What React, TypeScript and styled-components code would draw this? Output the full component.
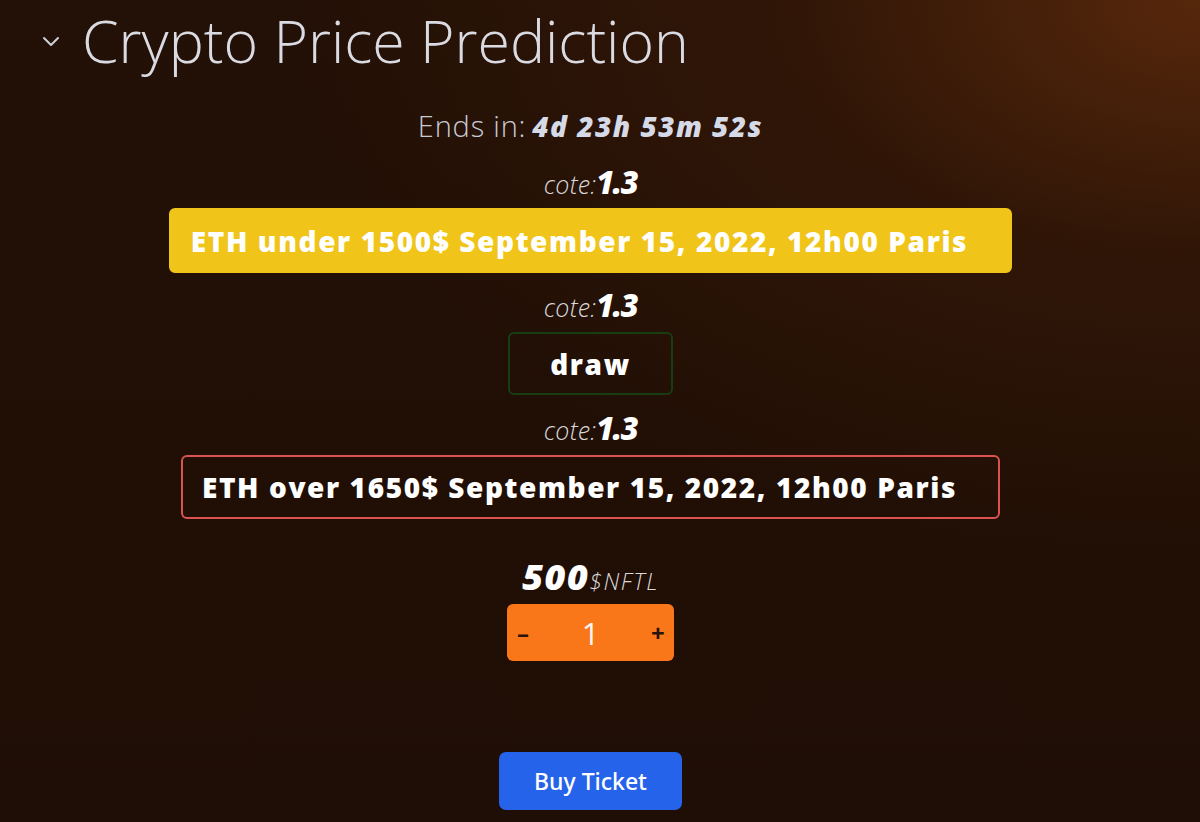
import React from 'react';
import styled, { createGlobalStyle } from 'styled-components';

const GlobalStyle = createGlobalStyle`
  html, body {
    margin: 0;
    padding: 0;
    height: 100%;
  }
  body {
    background: #1f0f05;
    font-family: 'Open Sans', 'Noto Sans', sans-serif;
  }
`;

type ChoiceProps = {
  $variant: 'yellow' | 'green' | 'red';
};

const Page = styled.div`
  width: 1200px;
  height: 822px;
  overflow: hidden;
  background:
    radial-gradient(ellipse 900px 560px at 1200px 0px, rgba(92, 42, 12, 0.9) 0%, rgba(62, 28, 8, 0.5) 45%, rgba(31, 15, 5, 0) 100%),
    linear-gradient(180deg, #231006 0%, #1f0e05 100%);
  display: flex;
  flex-direction: column;
`;

const Header = styled.div`
  display: flex;
  align-items: center;
  gap: 20px;
  padding-left: 40px;
  height: 84px;
`;

const Title = styled.h1`
  margin: 0 0 4px;
  font-family: 'Open Sans', sans-serif;
  font-weight: 300;
  font-size: 59px;
  color: #dadbe2;
`;

const Body = styled.div`
  display: flex;
  flex-direction: column;
  align-items: center;
  padding-right: 19px;
`;

const Countdown = styled.div`
  margin-top: 26px;
  height: 32px;
  line-height: 32px;
  display: flex;
  align-items: baseline;
  gap: 6px;
  color: #c9cbd4;
`;

const Label = styled.span`
  font-weight: 300;
  font-size: 29px;
  letter-spacing: 0.8px;
`;

const Timer = styled.span`
  font-family: 'Open Sans', sans-serif;
  font-weight: 800;
  font-style: italic;
  color: #d5dae6;
  font-size: 28px;
  letter-spacing: 1.5px;
`;

const Cote = styled.div<{ $m: string }>`
  display: flex;
  align-items: baseline;
  height: 36px;
  line-height: 36px;
  margin: ${({ $m }) => $m};
  color: #d8d8d8;
`;

const CoteLabel = styled.span`
  font-style: italic;
  font-weight: 300;
  font-size: 25px;
  letter-spacing: 0.2px;
`;

const CoteValue = styled.span`
  font-family: 'Open Sans', sans-serif;
  font-style: italic;
  font-weight: 800;
  font-size: 31px;
  color: #ffffff;
  letter-spacing: -1.5px;
`;

const Choice = styled.button<ChoiceProps>`
  box-sizing: border-box;
  display: flex;
  align-items: center;
  justify-content: center;
  flex-shrink: 0;
  height: ${({ $variant }) => ($variant === 'yellow' ? 65 : $variant === 'green' ? 63 : 64)}px;
  padding: 0 ${({ $variant }) => ($variant === 'green' ? 0 : 22)}px 0 0;
  border-radius: 6px;
  font-family: 'Open Sans', sans-serif;
  font-weight: 800;
  font-size: 28px;
  color: #ffffff;
  letter-spacing: 1.6px;
  background: ${({ $variant }) => ($variant === 'yellow' ? '#f0c419' : 'transparent')};
  border: 2px solid
    ${({ $variant }) => ($variant === 'yellow' ? '#f0c419' : $variant === 'green' ? '#173d12' : '#d9534f')};
  width: ${({ $variant }) => ($variant === 'yellow' ? 843 : $variant === 'green' ? 165 : 819)}px;
`;

const Price = styled.div`
  margin-top: 42px;
  height: 32px;
  line-height: 32px;
  display: flex;
  align-items: baseline;
`;

const Amount = styled.span`
  font-family: 'Open Sans', sans-serif;
  font-weight: 800;
  font-style: italic;
  font-size: 36px;
  color: #ffffff;
  letter-spacing: 1.5px;
`;

const Currency = styled.span`
  font-style: italic;
  font-weight: 300;
  font-size: 23px;
  color: #d8d8d8;
  letter-spacing: 1.5px;
`;

const Counter = styled.div`
  margin-top: 11px;
  width: 167px;
  height: 57px;
  border-radius: 6px;
  background: #f97718;
  display: flex;
  align-items: center;
  justify-content: space-between;
  padding: 0 8px 0 8px;
  box-sizing: border-box;
`;

const Step = styled.span`
  font-family: 'Open Sans', sans-serif;
  font-weight: 700;
  font-size: 24px;
  color: #2a1208;
  width: 16px;
  text-align: center;
`;

const Qty = styled.span`
  font-family: 'Open Sans', sans-serif;
  font-size: 31px;
  color: #f8f4f0;
`;

const BuyButton = styled.button`
  margin-top: 91px;
  width: 183px;
  height: 58px;
  border: none;
  border-radius: 7px;
  background: #2563eb;
  color: #ffffff;
  font-family: 'Noto Sans', sans-serif;
  font-weight: 500;
  font-size: 23px;
`;

const Chevron = () => (
  <svg width="22" height="14" viewBox="0 0 22 14" fill="none">
    <path d="M4 3l7 7 7-7" stroke="#cfd0d6" strokeWidth="2" strokeLinecap="round" strokeLinejoin="round" />
  </svg>
);

const CoteLine = ({ m }: { m: string }) => (
  <Cote $m={m}>
    <CoteLabel>cote:</CoteLabel>
    <CoteValue>1.3</CoteValue>
  </Cote>
);

export default function App() {
  return (
    <Page>
      <GlobalStyle />
      <Header>
        <Chevron />
        <Title>Crypto Price Prediction</Title>
      </Header>
      <Body>
        <Countdown>
          <Label>Ends in:</Label>
          <Timer>4d 23h 53m 52s</Timer>
        </Countdown>
        <CoteLine m="22px 0 8px" />
        <Choice $variant="yellow">ETH under 1500$ September 15, 2022, 12h00 Paris</Choice>
        <CoteLine m="14px 0 9px" />
        <Choice $variant="green">draw</Choice>
        <CoteLine m="15px 0 9px" />
        <Choice $variant="red">ETH over 1650$ September 15, 2022, 12h00 Paris</Choice>
        <Price>
          <Amount>500</Amount>
          <Currency>$NFTL</Currency>
        </Price>
        <Counter>
          <Step>–</Step>
          <Qty>1</Qty>
          <Step>+</Step>
        </Counter>
        <BuyButton>Buy Ticket</BuyButton>
      </Body>
    </Page>
  );
}
